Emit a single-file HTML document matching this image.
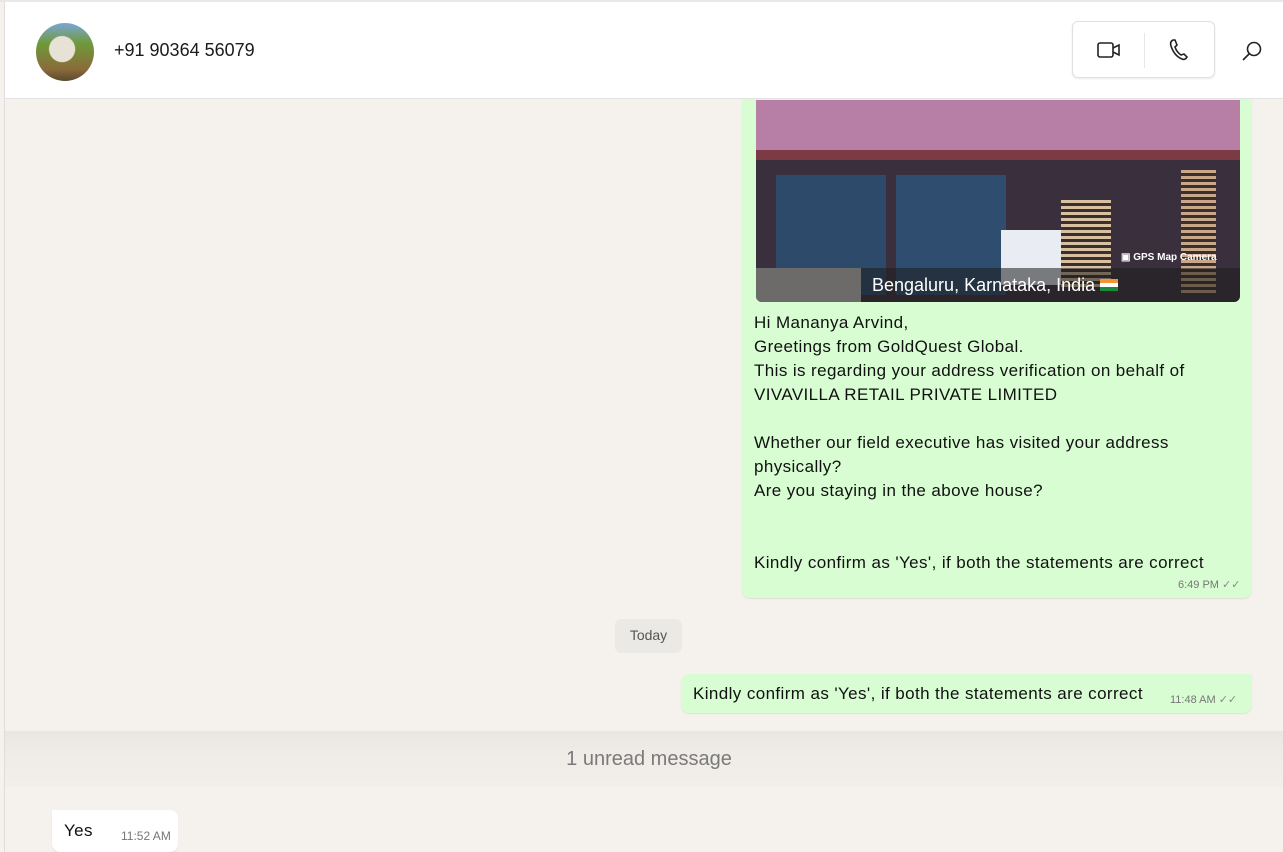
<!DOCTYPE html>
<html><head><meta charset="utf-8"><style>
*{margin:0;padding:0;box-sizing:border-box}
body{width:1283px;height:852px;overflow:hidden;font-family:"Liberation Sans",sans-serif;background:#f5f2ee;position:relative}
.top{position:absolute;left:0;top:0;width:1283px;height:2px;background:#e8e8e8}
.hdr{position:absolute;left:4px;top:2px;width:1279px;height:97px;background:#fff;border-bottom:1px solid #e2e2e2;border-left:1px solid #ddd}
.av{position:absolute;left:35px;top:21px;width:58px;height:58px;border-radius:50%;background:radial-gradient(circle at 45% 45%,#e8e2d6 0 28%,transparent 30%),linear-gradient(180deg,#7aa6d8 0,#6f9a3a 35%,#8a6a3a 80%,#5a4a30)}
.name{position:absolute;left:113px;top:38px;font-size:18px;color:#1b1b1b}
.btns{position:absolute;left:1071px;top:21px;width:143px;height:57px;border:1px solid #e0e0e0;border-radius:6px;box-shadow:0 1px 2px rgba(0,0,0,.08);background:#fff}
.btns .sep{position:absolute;left:71px;top:11px;width:1px;height:35px;background:#e6e6e6}
.bubble{position:absolute;background:#d9fdd3;border-radius:8px;box-shadow:0 1px 1px rgba(0,0,0,.08)}
.txt{font-size:17px;color:#111;line-height:24px;letter-spacing:0.4px}
.time{position:absolute;font-size:11px;color:#777}
.lb{position:absolute;left:4px;top:99px;width:1px;height:753px;background:#ddd}
</style></head><body>
<div class="top"></div>
<div class="lb"></div>
<div class="bubble" style="left:742px;top:92px;width:510px;height:506px"></div>
<div style="position:absolute;left:756px;top:100px;width:484px;height:202px;border-radius:0 0 6px 6px;overflow:hidden;background:#3a2f3c">
 <div style="position:absolute;left:0;top:0;width:484px;height:55px;background:#b87fa6"></div>
 <div style="position:absolute;left:0;top:50px;width:484px;height:10px;background:#7b3a44"></div>
 <div style="position:absolute;left:20px;top:75px;width:110px;height:120px;background:#2e4a6a"></div>
 <div style="position:absolute;left:140px;top:75px;width:110px;height:120px;background:#2f4d6e"></div>
 <div style="position:absolute;left:245px;top:130px;width:60px;height:55px;background:#e9ecf2"></div>
 <div style="position:absolute;left:305px;top:100px;width:50px;height:90px;background:repeating-linear-gradient(180deg,#d8c0a0 0 3px,#3a2f2f 3px 6px)"></div>
 <div style="position:absolute;left:425px;top:70px;width:35px;height:125px;background:repeating-linear-gradient(180deg,#c9a88a 0 3px,#3a2f2f 3px 6px)"></div>
 <div style="position:absolute;left:0;top:168px;width:484px;height:34px;background:rgba(30,30,30,.55)"></div>
 <div style="position:absolute;left:0;top:168px;width:105px;height:34px;background:#6d6a6a"></div>
 <div style="position:absolute;left:116px;top:175px;font-size:18px;color:#fff">Bengaluru, Karnataka, India <span style="display:inline-block;width:18px;height:12px;background:linear-gradient(#f59433 0 33%,#fff 33% 66%,#1b8a3a 66%)"></span></div>
 <div style="position:absolute;left:365px;top:152px;font-size:10px;color:#fff;font-weight:bold">▣ GPS Map Camera</div>
</div>
<div class="txt" style="position:absolute;left:754px;top:311px;width:495px">Hi Mananya Arvind,<br>Greetings from GoldQuest Global.<br>This is regarding your address verification on behalf of<br>VIVAVILLA RETAIL PRIVATE LIMITED<br><br>Whether our field executive has visited your address<br>physically?<br>Are you staying in the above house?<br><br><br>Kindly confirm as 'Yes', if both the statements are correct</div>
<div class="time" style="left:1178px;top:578px">6:49 PM <span style="color:#888">✓✓</span></div>
<div style="position:absolute;left:615px;top:619px;width:67px;height:34px;background:#ebe9e6;border-radius:6px;font-size:14px;color:#555;text-align:center;line-height:32px">Today</div>
<div class="bubble" style="left:681px;top:674px;width:571px;height:39px;border-top-right-radius:0"></div>
<div class="txt" style="position:absolute;left:693px;top:682px;white-space:nowrap">Kindly confirm as 'Yes', if both the statements are correct</div>
<div class="time" style="left:1170px;top:693px">11:48 AM <span style="color:#888">✓✓</span></div>
<div style="position:absolute;left:5px;top:731px;width:1278px;height:56px;background:linear-gradient(#e9e6e2,#efece8 40%,#f2efeb)"></div>
<div style="position:absolute;left:0;top:748px;width:1298px;text-align:center;font-size:20px;color:#7a7a7a">1 unread message</div>
<div style="position:absolute;left:52px;top:810px;width:126px;height:42px;background:#fff;border-radius:0 8px 8px 8px;box-shadow:0 1px 1px rgba(0,0,0,.08)"></div>
<div class="txt" style="position:absolute;left:64px;top:819px">Yes</div>
<div class="time" style="left:121px;top:829px;font-size:12px">11:52 AM</div>
<div class="hdr">
 <div class="av" style="left:31px"></div>
 <div class="name" style="left:109px">+91 90364 56079</div>
 <div class="btns" style="left:1067px;top:19px"><div class="sep"></div>
  <svg style="position:absolute;left:23px;top:18px" width="26" height="20" viewBox="0 0 26 20" fill="none" stroke="#222" stroke-width="1.6"><rect x="2" y="3" width="15" height="14" rx="2"/><path d="M17 8l6-3v10l-6-3"/></svg>
  <svg style="position:absolute;left:95px;top:16px" width="22" height="24" viewBox="0 0 22 24" fill="none" stroke="#222" stroke-width="1.6"><path d="M5 2c-2 1-3 3-2 6 2 6 6 11 11 13 2 1 4 0 5-2l-3-3-3 1c-3-2-5-5-6-8l2-2-2-5z"/></svg>
 </div>
 <svg style="position:absolute;left:1236px;top:38px" width="22" height="22" viewBox="0 0 22 22" fill="none" stroke="#222" stroke-width="1.6"><circle cx="13" cy="9" r="6.5"/><path d="M8.5 13.5L2 20"/></svg>
</div>
</body></html>
